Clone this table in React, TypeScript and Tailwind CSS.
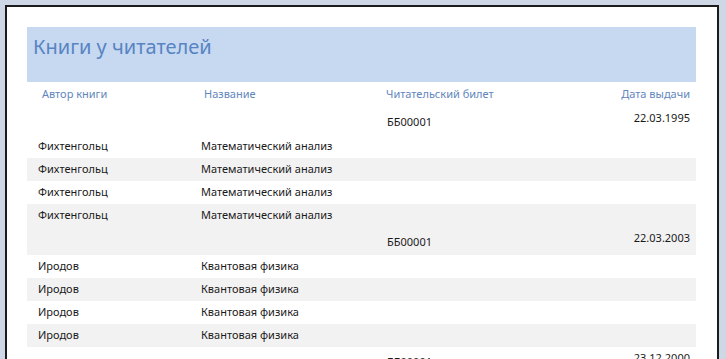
import React from 'react';

type Loan = {
  ticket: string;
  date: string;
  author: string;
  title: string;
  copies: number;
};

// the third group sits at the bottom edge, only its header shows
const loans: Loan[] = [
  { ticket: 'ББ00001', date: '22.03.1995', author: 'Фихтенгольц', title: 'Математический анализ', copies: 4 },
  { ticket: 'ББ00001', date: '22.03.2003', author: 'Иродов', title: 'Квантовая физика', copies: 4 },
  { ticket: 'ББ00001', date: '23.12.2000', author: '', title: '', copies: 0 },
];

const font = { fontFamily: '"Segoe UI", "Noto Sans", "Open Sans", sans-serif' };

const App = () => {
  return (
    <div className="h-[359px] w-[726px] overflow-hidden bg-[#cdd7e6] pt-[5px] pl-[5px] pr-[7px]" style={font}>
      <div className="h-full border-t-2 border-l-2 border-r-2 border-[#1c1c1c] bg-white pt-[20px] pl-[20px] pr-[21px]">
        {/* Report header */}
        <div className="h-[55px] bg-[#c6d9f0] pl-[6px] pt-[6px]">
          <h1 className="text-[20px] leading-[28px] text-[#5884c3]">Книги у читателей</h1>
        </div>

        {/* Column headings */}
        <div className="flex h-[25px] items-center text-[11px] text-[#5f86bd]">
          <div className="w-[174px] pl-[15px]">Автор книги</div>
          <div className="w-[185px] pl-[3px]">Название</div>
          <div className="flex-1">Читательский билет</div>
          <div className="pr-[6px] text-right">Дата выдачи</div>
        </div>

        {loans.map((loan, i) => (
          <div key={i}>
            {/* group header: alternates on its own */}
            <div
              className={`flex h-[28px] text-[11px] leading-[14px] text-[#1a1a1a] ${
                i % 2 === 0 ? 'bg-white' : 'bg-[#f2f2f2]'
              }`}
            >
              <div className="w-[360px]" />
              <div className="flex-1 pt-[8px]">{loan.ticket}</div>
              <div className="pr-[6px] pt-[4px] text-right">{loan.date}</div>
            </div>
            {Array.from({ length: loan.copies }).map((_, j) => (
              <div
                key={j}
                className={`flex h-[23px] items-center text-[11px] text-[#1a1a1a] ${
                  j % 2 === 0 ? 'bg-white' : 'bg-[#f2f2f2]'
                }`}
              >
                <div className="w-[174px] pl-[11px]">{loan.author}</div>
                <div className="flex-1">{loan.title}</div>
              </div>
            ))}
          </div>
        ))}
      </div>
    </div>
  );
};

export default App;
